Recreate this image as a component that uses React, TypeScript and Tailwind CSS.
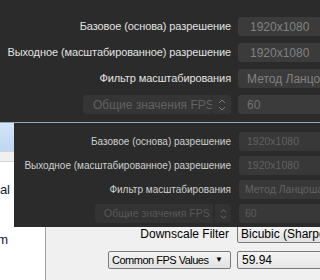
const darkFont = { fontFamily: '"Liberation Sans", Arial, sans-serif' }

const Spin = ({ size = 6 }: { size?: number }) => (
  <svg width={size + 2} height={size * 2 + 2} viewBox="0 0 8 14" fill="none" stroke="#7a7a7a" strokeWidth="1">
    <path d="M1 5 L4 2 L7 5" />
    <path d="M1 9 L4 12 L7 9" />
  </svg>
)

const TopPanel = () => {
  const rows = [
    { label: "Базовое (основа) разрешение", value: "1920x1080", pad: "pl-[12px]" },
    { label: "Выходное (масштабированное) разрешение", value: "1920x1080", pad: "pl-[12px]" },
    { label: "Фильтр масштабирования", value: "Метод Ланцоша", pad: "pl-[9px]" },
  ]
  return (
    <div className="h-[122px] bg-[#2b2b2b] pt-[17px] flex flex-col gap-[7px] text-[12px] whitespace-nowrap" style={darkFont}>
      {rows.map((r) => (
        <div key={r.label} className="flex h-[19px] items-center">
          <div className="w-[231px] shrink-0 text-right text-[#e2e2e2] text-[11px] tracking-[-0.1px]">{r.label}</div>
          <div className={`ml-[7px] w-[100px] shrink-0 h-full bg-[#3b3b3b] rounded-[3px] flex items-center text-[#828282] ${r.pad}`}>
            {r.value}
          </div>
        </div>
      ))}
      <div className="flex h-[19px]">
        <div className="w-[231px] shrink-0 flex justify-end">
          <div className="w-[128px] h-full bg-[#353535] rounded-l-[3px] flex items-center pl-[10px] text-[#626262]">
            Общие значения FPS
          </div>
          <div className="ml-px w-[19px] h-full bg-[#353535] rounded-r-[3px] flex items-center justify-center">
            <Spin />
          </div>
        </div>
        <div className="ml-[7px] w-[100px] shrink-0 h-full bg-[#3b3b3b] rounded-[3px] flex items-center pl-[9px] text-[#737373]">60</div>
      </div>
    </div>
  )
}

const Overlay = () => {
  const rows = [
    { label: "Базовое (основа) разрешение", value: "1920x1080", pad: "pl-[8px]" },
    { label: "Выходное (масштабированное) разрешение", value: "1920x1080", pad: "pl-[8px]" },
    { label: "Фильтр масштабирования", value: "Метод Ланцоша", pad: "pl-[6px]" },
  ]
  return (
    <div
      className="absolute left-[14px] top-0 w-[306px] h-[104px] bg-[#2b2b2b] pt-[9px] flex flex-col gap-[5px] text-[10.5px] whitespace-nowrap"
      style={darkFont}
    >
      {rows.map((r) => (
        <div key={r.label} className="flex h-[19px] items-center">
          <div className="w-[217px] shrink-0 text-right text-[#cfcfcf] text-[10px]">{r.label}</div>
          <div className={`ml-[8px] w-[100px] shrink-0 h-full bg-[#383838] rounded-[3px] flex items-center text-[#626262] ${r.pad}`}>
            {r.value}
          </div>
        </div>
      ))}
      <div className="flex h-[19px]">
        <div className="w-[217px] shrink-0 flex justify-end">
          <div className="w-[118px] h-full bg-[#333333] rounded-l-[3px] flex items-center pl-[9px] text-[#585858]">
            Общие значения FPS
          </div>
          <div className="ml-[2px] w-[16px] h-full bg-[#333333] rounded-r-[3px] flex items-center justify-center">
            <Spin size={5} />
          </div>
        </div>
        <div className="ml-[8px] w-[100px] shrink-0 h-full bg-[#383838] rounded-[3px] flex items-center pl-[6px] text-[#5e5e5e]">60</div>
      </div>
    </div>
  )
}

const winFont = { fontFamily: '"Liberation Sans", Arial, sans-serif' }

const App = () => {
  return (
    <div className="w-[320px] h-[280px] overflow-hidden bg-white">
      <TopPanel />
      <div className="h-px bg-[#93a7bd]" />
      <div className="relative h-[157px] flex text-[12px] whitespace-nowrap" style={winFont}>
        {/* left list, mostly hidden under the dark panel */}
        <div className="w-[46px] shrink-0 bg-white border-r border-[#a0a0a0] flex flex-col">
          <div className="h-[28px] bg-gradient-to-b from-[#d3e5f8] to-[#bfd6f1]" />
          <div className="h-[11px] bg-[#f0f0f0] border-y border-[#d4d4d4]" />
          <div className="h-[20px]" />
          <div className="w-[10px] overflow-hidden flex justify-end text-[13px] text-[#111a3a] leading-[16px]">
            <span>General</span>
          </div>
          <div className="h-[34px]" />
          <div className="w-[8px] overflow-hidden flex justify-end text-[13px] text-[#111a3a] leading-[16px]">
            <span>Stream</span>
          </div>
        </div>
        {/* right settings area */}
        <div className="flex-1 bg-[#f0f0f0] pt-[102px] flex flex-col gap-[8px] text-black">
          <div className="flex h-[18px] items-center">
            <div className="w-[183px] shrink-0 text-right">Downscale Filter</div>
            <div className="ml-[8px] w-[100px] shrink-0 h-full border border-[#7a7a7a] rounded-[2px] bg-gradient-to-b from-[#f4f4f4] to-[#e2e2e2] flex items-center pl-[3px] overflow-hidden">
              Bicubic (Sharpened scaling, 16 samples)
            </div>
          </div>
          <div className="flex h-[18px]">
            <div className="w-[185px] shrink-0 flex justify-end">
              <div className="w-[123px] h-full border border-[#7a7a7a] rounded-[2px] bg-gradient-to-b from-[#f4f4f4] to-[#e2e2e2] flex items-center justify-between pl-[3px] pr-[7px]">
                <span className="text-[11px] tracking-[-0.5px]">Common FPS Values</span>
                <span className="text-[8px]">▼</span>
              </div>
            </div>
            <div className="ml-[6px] w-[100px] shrink-0 h-full border border-[#7a7a7a] rounded-[2px] bg-gradient-to-b from-[#f4f4f4] to-[#e6e6e6] flex items-center pl-[4px]">
              59.94
            </div>
          </div>
        </div>
        <Overlay />
      </div>
    </div>
  )
}

export default App
